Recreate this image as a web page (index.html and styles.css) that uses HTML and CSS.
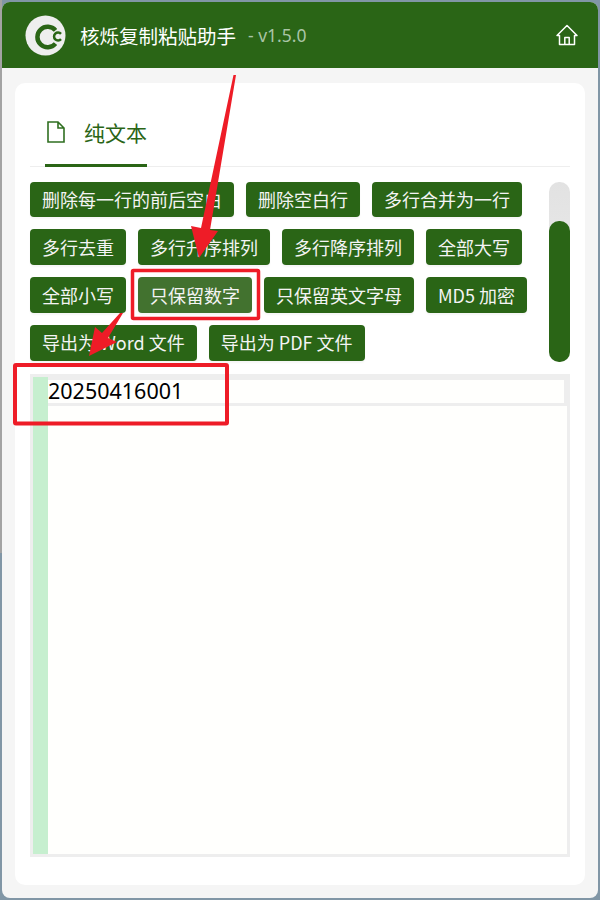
FILE: index.html
```html
<!DOCTYPE html>
<html lang="zh-CN">
<head>
  <meta charset="UTF-8" />
  <meta name="viewport" content="width=device-width, initial-scale=1.0" />
  <title>核烁复制粘贴助手</title>
  <link rel="stylesheet" href="styles.css">
</head>
<body>

  <div class="window">
    <header class="header">
      <svg class="logo" width="41" height="41" viewBox="0 0 41 41">
        <circle cx="20.5" cy="20.5" r="20" fill="#eeeeee" />
        <path d="M30.500 15.400 A10.250 10.250 0 1 0 30.500 28.600" fill="none" stroke="#2a6516" stroke-width="4.500" />
        <path d="M36 18.800 A4 4 0 1 0 36 24.200" fill="none" stroke="#2a6516" stroke-width="2.500" />
      </svg>
      <span class="app-name">核烁复制粘贴助手</span>
      <span class="version">- v1.5.0</span>
      <svg class="home" width="24" height="22" viewBox="0 0 24 22">
        <path d="M2 11.5 L12 1.5 L22 11.5 L19.5 11.5 L19.5 20.5 L4.5 20.5 L4.5 11.5 Z M9.8 20.5 L9.8 13.5 L14.2 13.5 L14.2 20.5" fill="none" stroke="#ffffff" stroke-width="1.5" stroke-linejoin="round" />
      </svg>
    </header>

    <main class="main">
      <section class="card">
        <nav class="tabs">
          <div class="tab">
            <svg class="tab-icon" width="18" height="22" viewBox="0 0 18 22">
              <path d="M1 1 L11 1 L17 7 L17 21 L1 21 Z M11 1 L11 7 L17 7" fill="none" stroke="#2f6f20" stroke-width="1.6" />
            </svg>
            <span>纯文本</span>
          </div>
        </nav>

        <div class="tools">
          <div class="buttons">
            <button class="btn">删除每一行的前后空白</button>
            <button class="btn">删除空白行</button>
            <button class="btn">多行合并为一行</button>
            <button class="btn">多行去重</button>
            <button class="btn">多行升序排列</button>
            <button class="btn">多行降序排列</button>
            <button class="btn">全部大写</button>
            <button class="btn">全部小写</button>
            <button class="btn btn-hover">只保留数字</button>
            <button class="btn">只保留英文字母</button>
            <button class="btn">MD5 加密</button>
            <button class="btn">导出为 Word 文件</button>
            <button class="btn">导出为 PDF 文件</button>
          </div>
          <div class="scroll-track">
            <div class="scroll-thumb"></div>
          </div>
        </div>

        <div class="editor">
          <div class="gutter"></div>
          <div class="content">
            <div class="line">20250416001</div>
            <div class="rest"></div>
          </div>
        </div>
      </section>
    </main>
  </div>

  <!-- red arrows and boxes drawn over the screenshot -->
  <svg class="marks" width="600" height="900" viewBox="0 0 600 900">
    <rect x="132.5" y="270.5" width="126" height="48" fill="none" stroke="#ee1c27" stroke-width="3.5" rx="1" />
    <rect x="15" y="365" width="212" height="58.500" fill="none" stroke="#ee1c27" stroke-width="4" rx="1" />
    <path d="M233.500 75 L236 75 L210 230 L218 231 L199 258 L191 226 L201 228 Z" fill="#ee1c27" />
    <path d="M120 313 L123 313 L108 338 L117 342 L89 356 L95 327 L102 333 Z" fill="#ee1c27" />
  </svg>

</body>
</html>
```

FILE: styles.css
```css
body {
  margin: 0;
  font-family: "Noto Sans", "Noto Sans CJK SC", sans-serif;
  background:
    linear-gradient(#a3a3a3, #a3a3a3) left top / 2px 553px no-repeat,
    #8196a6;
}

.window {
  margin: 2px;
  height: 896px;
  border-radius: 8px;
  overflow: hidden;
  display: flex;
  flex-direction: column;
  background-color: #f5f5f5;
}

.header {
  height: 66px;
  flex-shrink: 0;
  display: flex;
  align-items: center;
  padding: 0 19px 0 23px;
  background-color: #2a6516;
  color: white;
}

.logo {
  margin-right: 14px;
}

.app-name {
  font-size: 19.500px;
  font-family: "Noto Sans CJK SC", sans-serif;
}

.version {
  margin-left: 12px;
  font-size: 17.500px;
  color: #a9c4a6;
}

.home {
  margin-left: auto;
}

.main {
  flex: 1;
  display: flex;
  padding: 15px 13px 13px;
}

.card {
  flex: 1;
  display: flex;
  flex-direction: column;
  padding: 0 15px 28px;
  background-color: white;
  border-radius: 10px;
}

/* tabs */
.tabs {
  height: 83px;
  border-bottom: 1px solid #eeeeee;
  display: flex;
}

.tab {
  box-sizing: border-box;
  height: 84px;
  width: 102px;
  margin-left: 15px;
  padding: 17px 0 0 2px;
  display: flex;
  align-items: center;
  gap: 19px;
  border-bottom: 3px solid #2a6516;
  font-family: "Noto Sans CJK SC", sans-serif;
  font-size: 21px;
  color: #2a6516;
  white-space: nowrap;
}

.tab-icon {
  flex-shrink: 0;
}

/* tool buttons */
.tools {
  display: flex;
  justify-content: space-between;
  margin-top: 14.600px;
  height: 180.400px;
}

.buttons {
  width: 510px;
  display: flex;
  flex-wrap: wrap;
  align-content: flex-start;
  gap: 12px;
}

.btn {
  height: 35.800px;
  padding: 0 12px;
  border: none;
  border-radius: 4px;
  background-color: #2a6516;
  color: #f4f4f4;
  font-family: "Noto Sans CJK SC", sans-serif;
  font-size: 18px;
  line-height: 35px;
  white-space: nowrap;
  box-shadow: 0 2px 2px rgba(0, 0, 0, 0.04);
  cursor: pointer;
}

.btn-hover {
  background-color: #42722f;
}

.scroll-track {
  width: 21px;
  height: 180.400px;
  border-radius: 10px;
  background: linear-gradient(#e2e2e2, #f0f0f0);
  display: flex;
  align-items: flex-end;
}

.scroll-thumb {
  width: 21px;
  height: 141px;
  border-radius: 10px;
  background-color: #2a6516;
}

/* text area */
.editor {
  flex: 1;
  margin-top: 12px;
  padding: 3px;
  display: flex;
  background-color: #eeeeee;
}

.gutter {
  width: 15px;
  background-color: #c6efcf;
}

.content {
  flex: 1;
  display: flex;
  flex-direction: column;
  gap: 3px;
  padding-top: 3px;
}

.line {
  height: 23px;
  margin-right: 3px;
  background-color: #fffffd;
  color: black;
  font-size: 21.500px;
  line-height: 21px;
}

.rest {
  flex: 1;
  background-color: #fffffd;
}

.marks {
  position: absolute;
  top: 0;
  left: 0;
  pointer-events: none;
}
```
